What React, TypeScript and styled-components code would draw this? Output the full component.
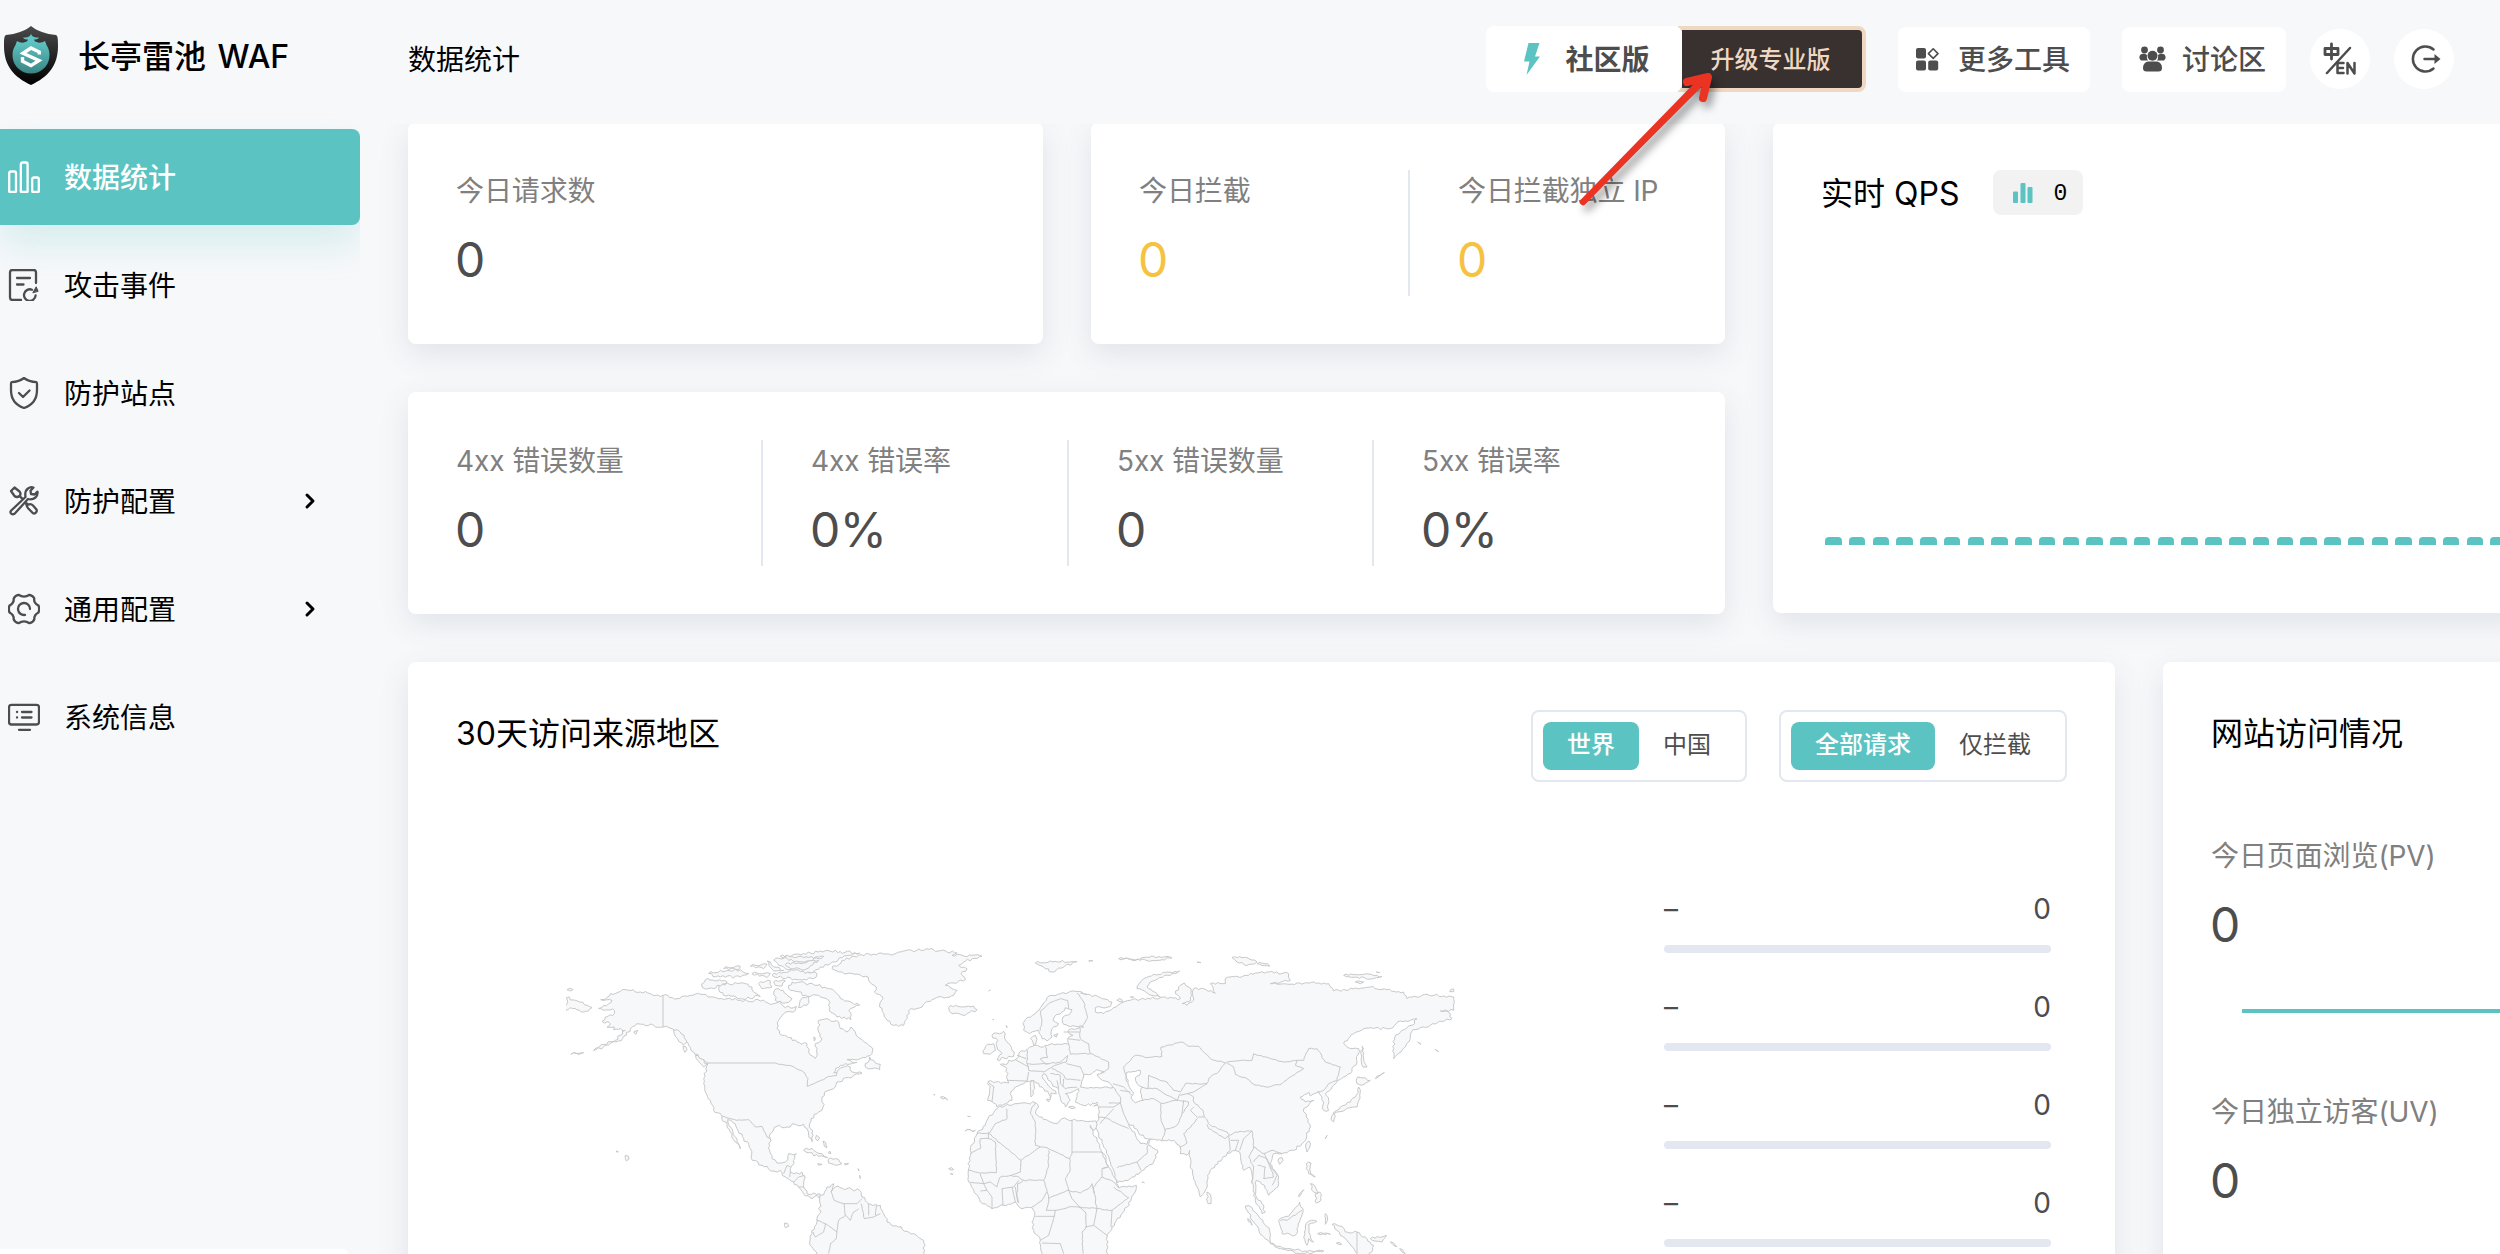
import React from "react";
import styled, { createGlobalStyle, css } from "styled-components";

const TEAL = "#5bc4c2";
const LINE = "#e3e7ef";
const INK = "#4d4d4d";

const GlobalStyle = createGlobalStyle`
  * { box-sizing: border-box; }
  body {
    margin: 0;
    background: #f7f8fa;
    color: #000;
    font-family: Inter, "Noto Sans CJK SC", sans-serif;
    font-size: 28px;
    overflow: hidden;
  }
  svg { display: block; flex: none; }
`;

const Page = styled.div`
  display: flex;
  width: 2500px;
  height: 1254px;
  overflow: hidden;
  position: relative;
`;

const Sidebar = styled.aside`
  width: 360px;
  height: 100%;
  flex: none;
  display: flex;
  flex-direction: column;
  overflow: hidden;
`;

const Brand = styled.div`
  display: flex;
  align-items: center;
  height: 129px;
  padding: 0 0 18px 4px;
  gap: 20px;
  flex: none;
  font-size: 32px;
  font-weight: 500;
  white-space: nowrap;
`;

const BrandName = styled.span`
  padding-bottom: 3px;
  word-spacing: 3px;
`;

const Menu = styled.nav`
  display: flex;
  flex-direction: column;
  gap: 12px;
`;

const MenuItem = styled.div<{ $active?: boolean }>`
  display: flex;
  align-items: center;
  gap: 24px;
  height: 96px;
  padding: 0 43px 0 8px;
  color: #000;
  ${(p) =>
    p.$active &&
    css`
      background: ${TEAL};
      color: #fff;
      font-weight: 500;
      border-radius: 0 8px 8px 0;
      box-shadow: 0 20px 36px rgba(91, 196, 194, 0.2);
    `}
`;

const MenuIcon = styled.svg<{ $active?: boolean }>`
  width: 32px;
  height: 32px;
  fill: none;
  stroke: ${(p) => (p.$active ? "#fff" : INK)};
  stroke-width: 2.3;
  stroke-linecap: round;
  stroke-linejoin: round;
`;

const MenuText = styled.span`
  flex: 1;
  padding-bottom: 3px;
`;

const SideFoot = styled.div`
  margin-top: auto;
  width: 348px;
  height: 5px;
  background: #fff;
  border-radius: 0 8px 0 0;
`;

const Content = styled.div`
  flex: 1;
  min-width: 0;
  display: flex;
  flex-direction: column;
`;

const Header = styled.header`
  display: flex;
  align-items: center;
  height: 124px;
  padding: 0 46px 6px 48px;
  flex: none;
`;

const PageTitle = styled.h1`
  margin: 0;
  flex: 1;
  padding-bottom: 2px;
  font-size: 28px;
  font-weight: 400;
`;

const Edition = styled.div`
  display: flex;
  margin-right: 32px;
`;

const EditionTag = styled.div`
  display: flex;
  align-items: center;
  justify-content: center;
  gap: 25px;
  width: 196px;
  height: 66px;
  padding-left: 6px;
  border-radius: 8px;
  background: #fff;
  color: ${INK};
  font-weight: 600;
  z-index: 1;
`;

const UpgradeButton = styled.div`
  width: 188px;
  height: 66px;
  margin-left: -4px;
  padding: 0 3px 3px 0;
  display: flex;
  align-items: center;
  justify-content: center;
  border: 4px solid #f0d7c1;
  border-radius: 0 8px 8px 0;
  background: #38312f;
  color: #f0d7c1;
  font-size: 24px;
  font-weight: 500;
`;

const HeaderButton = styled.div<{ $w: number; $gap: number; $pad: number }>`
  display: flex;
  align-items: center;
  width: ${(p) => p.$w}px;
  height: 65px;
  padding-left: ${(p) => p.$pad}px;
  gap: ${(p) => p.$gap}px;
  margin-right: ${(p) => (p.$w > 180 ? 32 : 24)}px;
  border-radius: 8px;
  background: #fff;
  color: ${INK};
  font-weight: 500;
`;

const HeaderText = styled.span`
  padding-bottom: 2px;
`;

const RoundButton = styled.div`
  display: flex;
  align-items: center;
  justify-content: center;
  width: 60px;
  height: 60px;
  border-radius: 50%;
  background: #fff;
  & + & {
    margin-left: 24px;
    padding-left: 3px;
  }
`;

const Scroll = styled.main`
  flex: 1;
  min-height: 0;
  overflow: hidden;
`;

const Board = styled.div`
  width: 2500px;
  margin-top: -2px;
  padding-left: 48px;
  display: flex;
  flex-direction: column;
  gap: 48px;
`;

const BoardRow = styled.div`
  display: flex;
  gap: 48px;
`;

const LeftStats = styled.div`
  width: 1317px;
  flex: none;
  display: grid;
  grid-template-columns: 635px 634px;
  gap: 48px;
`;

const Card = styled.section<{ $w?: number; $h: number; $wide?: boolean }>`
  ${(p) => p.$w && `width: ${p.$w}px;`}
  ${(p) => p.$wide && "grid-column: 1 / 3;"}
  height: ${(p) => p.$h}px;
  flex: none;
  padding: 48px;
  border-radius: 8px;
  background: #fff;
  box-shadow: 0 10px 30px rgba(60, 80, 110, 0.12);
`;

const StatRow = styled.div<{ $cols: string }>`
  display: grid;
  grid-template-columns: ${(p) => p.$cols};
`;

const Stat = styled.div<{ $divided?: boolean }>`
  height: 126px;
  padding-left: ${(p) => (p.$divided ? 48 : 0)}px;
  border-left: ${(p) => (p.$divided ? `2px solid ${LINE}` : "none")};
`;

const Label = styled.div`
  height: 42px;
  line-height: 42px;
  color: #808080;
  font-size: 28px;
  font-weight: 400;
  letter-spacing: -0.1px;
  white-space: nowrap;
`;

const Value = styled.div<{ $warn?: boolean }>`
  height: 72px;
  margin-top: 12px;
  line-height: 72px;
  font-size: 48px;
  font-weight: 400;
  letter-spacing: -0.5px;
  margin-left: -1px;
  color: ${(p) => (p.$warn ? "#f5c242" : INK)};
`;

const CardHead = styled.div`
  display: flex;
  align-items: center;
  height: 48px;
`;

const CardTitle = styled.h2`
  margin: 0;
  font-size: 32px;
  line-height: 46px;
  padding-bottom: 1px;
  font-weight: 400;
  white-space: nowrap;
`;

const QpsBadge = styled.div`
  display: flex;
  align-items: center;
  gap: 20px;
  width: 90px;
  height: 45px;
  margin: 0 0 3px 34px;
  padding-left: 20px;
  border-radius: 8px;
  background: #f2f2f2;
  font-family: "Liberation Mono", monospace;
  font-size: 23px;
`;

const QpsCount = styled.span`
  padding-top: 2px;
`;

const QpsBars = styled.div`
  display: flex;
  gap: 7.27px;
  margin: 319px 0 0 4px;
`;

const QpsBar = styled.i`
  flex: none;
  width: 16.5px;
  height: 8px;
  border-radius: 4px 4px 0 0;
  background: ${TEAL};
`;

const Toggles = styled.div`
  display: flex;
  gap: 32px;
  margin: 24px 0 0 auto;
`;

const ToggleGroup = styled.div`
  display: flex;
  height: 72px;
  padding: 10px;
  border: 2px solid ${LINE};
  border-radius: 8px;
`;

const Toggle = styled.div<{ $on?: boolean }>`
  height: 48px;
  line-height: 46px;
  padding: 0 24px;
  border-radius: 8px;
  font-size: 24px;
  font-weight: ${(p) => (p.$on ? 500 : 400)};
  background: ${(p) => (p.$on ? TEAL : "transparent")};
  color: ${(p) => (p.$on ? "#fff" : INK)};
`;

const MapBody = styled.div`
  display: flex;
  justify-content: space-between;
  padding: 131px 16px 0 110px;
`;

const MapSlot = styled.div`
  margin-top: 58px;
  height: 330px;
`;

const RegionList = styled.div`
  width: 387px;
  display: flex;
  flex-direction: column;
`;

const Region = styled.div`
  height: 98px;
`;

const RegionText = styled.div`
  display: flex;
  justify-content: space-between;
  height: 56px;
  line-height: 40px;
  color: ${INK};
  font-weight: 400;
`;

const RegionBar = styled.div`
  height: 8px;
  border-radius: 4px;
  background: ${LINE};
`;

const VisitBlock = styled.div`
  height: 256px;
  margin-top: 77px;
  & + & {
    margin-top: 0;
  }
`;

const VisitLine = styled.div`
  height: 4px;
  margin: 48px 0 0 31px;
  background: ${TEAL};
`;

const Pointer = styled.svg`
  position: absolute;
  left: 1560px;
  top: 59px;
  z-index: 5;
  filter: drop-shadow(4px 6px 4px rgba(0, 0, 0, 0.4));
`;

/* ---------- world map ---------- */

// Adds small deterministic teeth to a traced coast so it reads as a shoreline.
function coast(points: string, amp = 3.2, closed = true): string {
  const n = points.trim().split(/[\s,]+/).map(Number);
  const pts: number[][] = [];
  for (let i = 0; i + 1 < n.length; i += 2) pts.push([n[i], n[i + 1]]);
  const out: string[] = [];
  let seed = 7 + pts.length;
  const rnd = () => {
    seed = (seed * 16807) % 2147483647;
    return seed / 2147483647 - 0.5;
  };
  const count = closed ? pts.length : pts.length - 1;
  for (let i = 0; i < count; i++) {
    const a = pts[i];
    const b = pts[(i + 1) % pts.length];
    out.push(a.join(","));
    const d = Math.hypot(b[0] - a[0], b[1] - a[1]);
    const k = Math.floor(d / 7);
    for (let j = 1; j < k; j++) {
      const t = j / k;
      const o = rnd() * amp * 2;
      out.push(
        `${(a[0] + (b[0] - a[0]) * t - ((b[1] - a[1]) / d) * o).toFixed(1)},${(a[1] + (b[1] - a[1]) * t + ((b[0] - a[0]) / d) * o).toFixed(1)}`
      );
    }
  }
  if (!closed) out.push(pts[pts.length - 1].join(","));
  return "M" + out.join("L") + (closed ? "Z" : "");
}

const WEST_LAND = [
  "368,225 330,220 300,215 255,208 210,220 195,236 181,238 215,240 205,250 175,264 190,270 217,266 222,280 195,290 185,303 210,310 200,320 222,320 220,328 255,330 240,345 225,360 190,372 160,391 205,374 235,362 258,345 270,325 290,310 310,312 340,315 368,320 395,325 410,340 430,360 445,375 460,395 480,415 504,428 497,445 490,490 495,515 510,540 520,570 545,588 560,615 575,640 585,665 600,685 590,655 575,625 562,598 572,600 590,625 610,655 630,685 632,712 665,735 700,752 720,750 735,770 760,785 775,800 790,820 815,835 830,825 838,835 838,820 820,818 800,820 790,800 795,770 785,755 760,760 750,755 755,735 768,700 745,700 735,725 710,728 695,715 688,690 690,655 690,640 710,618 740,620 765,612 790,612 800,625 805,645 815,664 818,645 808,610 812,595 835,575 848,560 845,530 860,512 885,500 890,485 925,472 940,465 965,458 935,455 930,440 910,440 880,458 900,435 915,430 950,426 920,418 960,415 995,400 998,386 985,375 960,355 945,335 932,320 920,335 900,325 895,305 860,295 835,300 835,335 845,355 825,370 830,405 825,414 805,395 800,370 770,365 745,352 725,345 710,325 715,300 730,280 765,270 768,258 735,262 720,240 700,250 660,242 600,240 560,235 520,230 480,222 450,225 410,235",
  "875,145 905,120 985,100 1060,102 1090,92 1165,87 1250,97 1235,105 1325,108 1275,122 1255,135 1280,145 1262,160 1275,178 1240,188 1215,195 1250,210 1240,225 1175,238 1145,260 1112,265 1090,315 1060,315 1040,300 1018,260 1028,235 1002,215 1008,200 975,168 920,160",
  "700,120 760,102 870,93 958,98 905,112 870,130 840,140 820,155 770,160 730,140",
  "695,165 760,150 830,160 820,175 735,175",
  "720,108 790,112 850,108 800,122 745,120",
  "735,132 790,128 835,120 800,145 760,145",
  "535,208 545,190 600,188 635,200 640,215 660,228 600,235 550,225",
  "485,200 495,178 545,182 560,185 520,205",
  "745,205 755,185 780,185 830,195 870,205 900,235 958,255 925,270 932,298 890,290 870,275 865,240 835,225 795,225",
  "655,190 690,182 695,200 665,205", "700,215 715,205 755,235 735,248 705,240", "780,240 805,228 800,255 775,262", "700,185 735,182 725,197 705,195",
  "505,160 540,150 600,148 625,160 600,170 540,170", "550,145 600,138 595,148", "630,138 680,132 670,145", "635,160 690,160 680,172", "680,122 700,140 730,150 700,152",
  "975,440 988,410 1000,420 1020,432 1018,448 995,445",
  "1225,262 1245,255 1300,257 1310,268 1275,285 1235,280", "790,690 815,684 845,700 862,712 835,708 800,697",
  "863,718 885,715 905,730 885,735 865,728", "832,730 845,732 835,735", "912,730 925,730 915,734", "80,208 98,208 90,212", "78,232 105,240 140,255 155,262 130,275 90,262 78,270",
  "828,645 838,652 832,662", "848,662 860,682 852,678", "868,692 872,700 864,698", "92,402 110,400 130,397 108,399", "228,692 234,694 230,696", "255,705 266,716 258,722", "733,908 745,918 735,922",
  "838,835 860,800 880,790 872,815 885,800 920,805 958,810 965,830 985,850 1020,855 1030,880 1040,905 1075,920 1120,940 1150,960 1153,990 1140,1030 870,1030 830,1002 808,965 815,940 830,905 838,880",
  "1330,400 1335,378 1360,370 1365,390 1350,402", "1355,345 1390,333 1392,350 1410,375 1422,395 1420,408 1370,418 1385,400 1370,380 1372,360",
  "400,330 420,335 440,365 430,375 412,355", "428,378 440,388 434,396", "465,405 500,430 490,440 468,415", "820,350 826,354 822,362",
  "280,335 292,330 286,342", "953,745 956,752", "958,765 960,775", "1180,522 1184,524", "1200,530 1222,539", "1282,588 1290,589", "1275,632 1305,630", "1225,745 1240,748", "1230,760 1238,762", "1345,212 1350,209", "1357,298 1361,297", "1398,315 1400,322",
];

const EAST_LAND = [
  "128,310 130,330 148,340 165,332 175,330 185,355 200,362 215,350 215,325 235,310 218,300 222,290 245,275 255,262 275,268 270,280 248,290 250,312 285,318 310,320 275,325 262,335 278,345 262,355 265,372 245,372 195,375 180,380 160,375 150,355 165,345 170,357 165,372 148,380 140,388 118,395 115,410 105,418 85,420 82,430 60,432 80,445 80,475 85,488 25,482 22,490 30,500 22,540 40,548 50,560 75,550 95,540 90,520 105,500 130,490 155,480 185,500 205,520 210,537 212,518 228,520 200,490 185,468 190,460 215,490 235,510 240,535 255,560 270,540 255,520 285,510 295,505 290,520 285,545 310,555 345,550 350,545 355,560 355,590 345,620 352,632 370,680 390,725 400,750 410,787 450,775 480,755 520,725 532,690 505,675 510,655 500,672 480,670 465,645 445,612 460,615 475,640 500,655 515,657 545,662 580,660 600,680 600,700 620,705 628,690 630,735 645,790 660,830 678,805 682,765 690,750 740,700 765,690 778,695 790,750 808,740 818,790 825,840 845,880 855,875 845,850 828,830 828,780 840,785 860,810 865,825 885,805 895,790 895,770 870,730 880,700 905,700 940,690 970,665 990,620 978,590 970,565 1000,540 975,545 960,530 985,515 990,527 1015,515 1025,530 1030,570 1045,570 1045,540 1035,520 1060,495 1090,470 1110,460 1130,425 1135,385 1115,385 1090,370 1120,340 1150,325 1230,325 1260,302 1290,300 1310,295 1295,315 1265,330 1243,350 1240,385 1240,415 1285,365 1298,328 1350,315 1415,295 1405,275 1380,272 1420,270 1420,230 1340,222 1280,235 1270,215 1170,200 1060,212 1045,190 1030,188 870,190 930,180 925,160 860,155 735,175 735,190 690,190 705,218 670,205 640,205 640,240 620,255 605,250 632,240 632,205 612,188 600,195 585,220 600,235 540,232 450,240 420,250 400,262 370,280 345,275 345,262 390,258 395,245 360,232 320,222 280,212 240,220 200,232 185,255 165,280 135,298",
  "50,565 75,555 110,550 165,547 175,560 165,580 205,602 230,610 245,595 275,600 330,603 347,602 350,612 342,630 330,615 350,660 370,700 385,740 405,775 415,803 440,800 468,795 465,815 440,860 395,920 380,950 383,1040 185,1040 180,960 160,930 155,905 163,885 155,862 125,865 105,845 70,855 35,865 0,845 -20,810 -35,785 -35,745 -30,690 -10,640 15,615 20,600",
  "165,128 210,122 290,124 250,140 215,155 190,140", "415,115 470,118 520,108 575,113 500,121", "325,122 338,121", "650,125 662,127",
  "470,205 490,175 520,162 598,152 575,160 510,185 500,200 540,230 500,218", "755,112 800,112 830,125 800,135 770,125", "830,130 862,130 868,138", "1090,165 1150,162 1205,168 1180,175 1130,170", "1125,185 1150,185 1140,190", "1188,155 1198,157", "410,240 415,235 428,245", "450,230 460,230",
  "1408,214 1420,206 1420,214", "1145,378 1150,420 1160,440 1148,440 1142,400", "1130,490 1132,470 1170,480 1145,495", "1135,500 1138,525 1130,560 1095,568 1070,575 1058,580 1080,560 1110,545 1125,530", "1055,585 1062,580 1060,605 1052,598", "1185,475 1200,465 1212,457",
  "978,668 986,662 988,680 980,695", "893,720 905,712 908,720 898,732", "680,815 692,830 692,850 683,850", "978,730 992,728 990,755 1005,770 985,760 978,745", "1005,820 1018,815 1022,840 1008,848", "990,790 1005,800 1012,820 1000,815", "955,830 970,808 960,825",
  "795,857 815,862 840,895 868,930 870,968 845,945 820,905", "895,900 925,888 945,862 958,845 968,865 958,905 945,945 905,940 900,918", "870,970 900,978 960,990 1030,992 960,1000 900,985",
  "975,920 985,903 1010,903 985,912 990,945 1000,965 985,955 980,975 970,950", "1035,880 1042,900 1035,912", "1055,912 1085,918 1095,935 1130,935 1160,955 1180,975 1160,1020 1130,1000 1100,960 1080,945 1070,930", "1170,955 1205,950 1218,945 1205,965 1185,962", "1230,965 1250,980 1240,975", "1258,985 1275,1000 1265,995", "150,490 160,480 160,520 152,530", "198,537 208,537 205,545", "265,560 285,562 275,565", "340,557 352,553", "220,345 232,340 228,350",
  "1312,365 1322,372", "1365,388 1375,394", "485,785 492,787", "1035,655 1040,645", "1012,940 1050,942", "802,895 815,915", "1068,968 1084,972",
];

const SEAS = [
  "310,462 300,500 340,503 372,500 398,502 390,490 360,475 350,462 372,455 350,448 332,462",
  "437,458 480,450 478,465 465,472 470,490 485,500 480,515 488,540 465,547 452,530 460,520 445,495",
];

const WEST_BORDERS = [
  "504,428 706,428", "706,428 715,432 755,437 790,455 803,475 800,498 830,485 850,478 865,468 888,466 890,455",
  "545,588 590,600 625,598 645,620 665,618 680,650 690,655", "730,760 740,735 750,740", "750,755 748,770", "760,785 775,770 793,765", "775,800 790,800",
  "872,815 882,840 912,850 915,885 895,900 890,935", "912,850 950,850 965,835", "915,885 930,900 940,875 955,865", "962,850 972,895 1000,890 1020,880", "985,850 985,885", "1008,855 1005,885",
  "830,900 855,910 850,935 825,950 818,935", "855,910 890,935 888,955 870,970 865,1000",
];

const EAST_BORDERS = [
  "180,330 185,300 180,275 205,250 240,235 262,240 265,265", "290,218 310,245 322,292 305,318", "320,222 300,218",
  "298,322 300,355 325,370 330,400 270,402 265,372", "262,355 300,360", "250,335 298,335", "330,400 385,425 385,445 360,460",
  "195,378 202,412 180,415 195,430 240,425 262,405", "140,388 140,430 155,432 205,430", "140,430 145,450 190,455 215,440 240,430 258,425 262,405",
  "258,430 300,440 310,462", "215,445 245,460 255,475 300,480", "210,460 240,465 240,490 255,505 290,500", "110,405 138,415", "105,418 145,440", "80,480 140,482 145,455",
  "40,500 35,545", "250,475 248,500", "230,480 235,505",
  "398,500 412,520 420,530 420,548 385,548", "398,490 430,500 455,525", "420,510 450,515", "420,548 430,580 445,612", "355,560 400,560 420,548", "355,590 375,592 400,565", "360,610 375,592 410,610 445,625",
  "410,742 470,725 500,700 502,675", "470,725 482,750", "440,485 430,440 465,405 500,412 545,408 542,380 605,365 625,378 655,378 690,415 735,428 715,455 690,470 680,490 615,490 600,515 580,510 560,485 530,475 505,465 502,505 485,500",
  "502,505 530,505 560,525 590,540 600,520", "488,540 520,535 545,550 565,545 590,540", "540,550 542,600 555,630 545,660", "552,630 590,615 605,580 620,560 625,545 590,540", "605,580 610,540",
  "620,520 640,530 640,545 668,570 672,590 655,590 640,610 610,640 620,668 598,680", "600,525 640,515 680,490", "640,560 630,570 650,590",
  "735,428 765,422 815,420 820,400 870,415 910,425 950,420 970,420 985,385 1010,385 1035,425 1080,440 1070,480 1045,490 1030,510 1010,515",
  "740,430 760,440 765,462 800,475 820,492 865,500 905,490 930,470 970,445 945,435 950,420",
  "672,590 690,615 740,635 750,645 765,635 815,632 820,680 850,700 880,690 905,700", "680,612 685,625 735,655 745,645", "745,645 750,690 740,698", "750,660 775,660 765,690", "778,690 790,655 815,632", "820,680 805,710 820,740 815,790", "820,725 835,705 860,715 880,770 850,775 855,740 832,735", "850,700 865,730 890,765 875,795",
  "165,547 155,560 150,580 165,605 165,675", "78,565 80,595 45,610 25,640", "25,640 122,720 180,680 165,675", "275,600 275,695 362,695", "275,695 268,715 200,682 180,680", "268,715 268,755 255,775 265,810", "205,690 205,735 190,780 130,780 115,770 92,765 60,770 50,800", "122,720 120,755 92,765", "-10,640 25,637 25,655 0,655 0,685 -30,700", "25,655 45,665 48,757 0,757", "-35,750 0,760 10,790 -30,785", "10,790 20,810 0,812", "50,800 30,785 10,790", "20,810 35,830 35,865", "65,805 68,855", "95,800 105,845", "65,805 100,800 115,780", "105,800 112,845", "130,780 112,790 110,825 115,848", "190,780 200,815 185,840 155,860", "200,815 205,835 260,810 265,810 300,818 330,800 335,790 342,820 350,865", "205,835 198,870 225,870 265,860 295,860 350,865 395,870 445,832 400,800", "165,888 222,888 225,870", "222,888 205,945 180,960", "342,820 340,800 365,770 400,785 412,800", "362,695 385,740 365,745 365,770", "395,870 392,920", "350,865 340,915 380,945", "315,920 340,915", "295,860 315,875 318,920 305,935 308,1000", "265,810 275,835 300,862", "185,968 240,970 250,1000", "365,745 380,740",
  "900,900 920,900 950,880 965,870", "1130,935 1130,1000",
  "25,488 42,500",
];

const isStraight = (d: string) => d.split(" ").length <= 3;

const WorldMap = () => (
  <svg width="890" height="330" viewBox="77 80 2670 990" style={{ overflow: "hidden" }}>
    <g fill="#f7f8fa" stroke="#c8c8c8" strokeWidth="3" strokeLinejoin="round">
      {WEST_LAND.map((d) => (
        <path key={d} d={coast(d, 4.5)} />
      ))}
      {WEST_BORDERS.map((d) => (
        <path key={d} d={coast(d, isStraight(d) ? 0 : 1.2, false)} fill="none" />
      ))}
      <path d="M368,225V320" />
      <g transform="translate(1320 0)">
        {EAST_LAND.map((d) => (
          <path key={d} d={coast(d, 3.6)} />
        ))}
        {SEAS.map((d) => (
          <path key={d} d={coast(d, 2)} fill="#fff" />
        ))}
        {EAST_BORDERS.map((d) => (
          <path key={d} d={coast(d, isStraight(d) ? 0 : 1.8, false)} fill="none" />
        ))}
      </g>
    </g>
  </svg>
);

/* ---------- icons ---------- */

const Logo = () => (
  <svg width="54" height="60" viewBox="0 0 54 60">
    <defs>
      <linearGradient id="shield" x1="0" y1="0" x2="0" y2="1">
        <stop offset="0" stopColor="#4a4a4a" />
        <stop offset="1" stopColor="#000" />
      </linearGradient>
      <linearGradient id="disc" x1="0" y1="0" x2="0" y2="1">
        <stop offset="0" stopColor="#5fc6c5" />
        <stop offset="1" stopColor="#3b8583" />
      </linearGradient>
    </defs>
    <path fill="url(#shield)" d="M27 0C21 5 12 8 2 9C0 10 0 14 0 20C0 40 10 51 27 59C44 51 54 40 54 20C54 14 54 10 52 9C42 8 33 5 27 0Z" />
    <path fill="url(#disc)" d="M13 15C17 17.500 21 17 24 14.500H30C33 17 37 17.500 41 15L42.500 19A18.500 18.500 0 1 1 11.500 19Z" />
    <path fill="#5fc6c5" d="M27 7.500C27.500 10.500 31 12 35 11.500C34 13.500 31.500 13.500 30 13.500L30.500 15H23.500L24 13.500C22.500 13.500 20 13.500 19 11.500C23 12 26.500 10.500 27 7.500Z" />
    <path fill="none" stroke="#fff" strokeWidth="3.400" strokeLinejoin="miter" d="M35.300 28.500V26L27 22L19 27.200L35 34.500L27 39.600L18.500 35.200V31" />
  </svg>
);

const BarsIcon = () => (
  <MenuIcon $active viewBox="0 0 32 32">
    <path d="M1.200 30.800V12.500Q1.200 10.500 3.200 10.500H6.500Q8 10.500 8 12.500V30.800ZM12.800 30.800V3.500Q12.800 1.500 14.800 1.500H18Q19.600 1.500 19.600 3.500V30.800ZM24.200 30.800V18.500Q24.200 16.500 26.200 16.500H29Q30.800 16.500 30.800 18.500V30.800Z" />
  </MenuIcon>
);

const EventIcon = () => (
  <MenuIcon viewBox="0 0 32 32">
    <path d="M28 14V3.500Q28 1 25.500 1H4.500Q2 1 2 3.500V28.500Q2 31 4.500 31H13M9 9H22M9 15.500H15.500M27.600 26.500A5.800 5.800 0 1 1 24 20.700" />
    <path d="M25 23.500L28.200 17.800L30 22Z" fill={INK} strokeWidth="1" />
  </MenuIcon>
);

const ShieldIcon = () => (
  <MenuIcon viewBox="0 0 32 32">
    <path d="M16 1C12 4 8 4.800 3.500 5.200Q3 5.500 3 7V13C3 22 7 28 16 31C25 28 29 22 29 13V7Q29 5.500 28.500 5.200C24 4.800 20 4 16 1ZM11 16L15 20L21.500 13.500" />
  </MenuIcon>
);

const ToolsIcon = () => (
  <MenuIcon viewBox="0 0 32 32">
    <path d="M3 6L6.500 2.500L11.500 6.500Q13.500 9 11.500 11Q9 13 6.500 11ZM11.800 11.200L14 13.400M17.800 17.800L20.300 19.600Q23 18.500 25 20.500L28.500 24.500Q29.200 26 28 27.500Q26.800 29 25 28.200L20.300 23.500Q18.800 22 17.800 17.800M3.200 25.500L17.500 12Q16.500 6 20 3.500Q22.500 1.500 25.500 2.500L22.500 5.800L23 9L26.500 9.500L29.500 6.700Q30 10 27.500 12.500Q24.500 15 20 14L6.800 28.500Q4.500 30 3 28.500Q1.800 27 3.200 25.500Z" />
  </MenuIcon>
);

const GearIcon = () => (
  <MenuIcon viewBox="0 0 32 32">
    <path d="M10.500 1.800Q16 5.500 21.500 1.800Q25.500 3 26.300 5.500Q25.500 10 30.500 12.500Q31.800 16 30.500 19.500Q25.800 22 26.300 26.500Q25 29.500 21.500 30.200Q16 26.500 10.500 30.200Q7 29.500 5.700 26.500Q6.200 22 1.500 19.500Q.2 16 1.500 12.500Q6.200 10 5.700 5.500Q7 2.500 10.500 1.800ZM22 16A6 6 0 1 0 17 21.900" />
  </MenuIcon>
);

const SystemIcon = () => (
  <MenuIcon viewBox="0 0 32 32">
    <path d="M3.500 3.800H28.500Q31 3.800 31 6.300V21Q31 23.500 28.500 23.500H3.500Q1 23.500 1 21V6.300Q1 3.800 3.500 3.800ZM14 11H23.500M14 16.500H23.500M9 11H9.100M9 16.500H9.100M11 28.800H22" />
  </MenuIcon>
);

const Chevron = () => (
  <svg width="14" height="18" viewBox="0 0 14 18" fill="none" stroke="#000" strokeWidth="3" strokeLinecap="round" strokeLinejoin="round">
    <path d="M4 3L10 9L4 15" />
  </svg>
);

const BoltIcon = () => (
  <svg width="16" height="32" viewBox="0 0 16 32" fill={TEAL}>
    <path d="M4.500 0H15.500L11 13.500H16L2.500 32L5.500 18.500H0Z" />
  </svg>
);

const AppsIcon = () => (
  <svg width="23" height="23" viewBox="0 0 23 23" fill={INK}>
    <rect width="10" height="10.500" rx="2" />
    <rect y="12.500" width="10" height="10" rx="2" />
    <rect x="12.200" y="12.500" width="10" height="10" rx="2" />
    <path d="M17.200 .8L22 5.600L17.200 10.400L12.400 5.600Z" fill="none" stroke={INK} strokeWidth="1.600" strokeLinejoin="round" />
  </svg>
);

const PeopleIcon = () => (
  <svg width="27" height="26" viewBox="0 0 27 26" fill={INK}>
    <circle cx="5.500" cy="4" r="3.400" />
    <circle cx="21.500" cy="4" r="3.400" />
    <path d="M1.500 8.500Q5 7 8 9Q7.500 13 9 14.500H2Q-1 12 1.500 8.500ZM25.500 8.500Q22 7 19 9Q19.500 13 18 14.500H25Q28 12 25.500 8.500Z" />
    <circle cx="13.500" cy="9.800" r="5" />
    <path d="M9 15.500H18Q23 16.500 23 22Q23 25.500 19.500 25.500H7.500Q4 25.500 4 22Q4 16.500 9 15.500Z" />
  </svg>
);

const LangIcon = () => (
  <svg width="34" height="34" viewBox="0 0 34 34" fill="none" stroke={INK} strokeWidth="2.800" strokeLinecap="round" strokeLinejoin="round">
    <path d="M2 6.500H15V12.500H2ZM8.500 2V17" />
    <path d="M27 6L4 31" strokeWidth="2.500" />
    <path d="M20.500 21H14.500V31H20.500M14.500 26H20M24.500 31.500V21L31.500 31.500V21" strokeWidth="2.500" />
  </svg>
);

const LogoutIcon = () => (
  <svg width="30" height="30" viewBox="0 0 30 30" fill="none" stroke={INK} strokeWidth="2.500" strokeLinecap="round">
    <path d="M22.500 5.500A12.500 12.500 0 1 0 22.500 24.500M13.500 15H25" />
    <path d="M23.500 10L29.500 15L23.500 20Z" fill={INK} stroke="none" />
  </svg>
);

const MiniBars = () => (
  <svg width="20" height="20" viewBox="0 0 20 20" fill={TEAL}>
    <rect y="8.500" width="5" height="11.500" rx="1" />
    <rect x="7.500" width="5" height="20" rx="1" />
    <rect x="14.500" y="4" width="5" height="16" rx="1" />
  </svg>
);

const menu = [
  { text: "攻击事件", icon: <EventIcon /> },
  { text: "防护站点", icon: <ShieldIcon /> },
  { text: "防护配置", icon: <ToolsIcon />, more: true },
  { text: "通用配置", icon: <GearIcon />, more: true },
  { text: "系统信息", icon: <SystemIcon /> },
];

export default function App() {
  return (
    <>
      <GlobalStyle />
      <Page>
        <Sidebar>
          <Brand>
            <Logo />
            <BrandName>长亭雷池 WAF</BrandName>
          </Brand>
          <Menu>
            <MenuItem $active>
              <BarsIcon />
              <MenuText>数据统计</MenuText>
            </MenuItem>
            {menu.map((m) => (
              <MenuItem key={m.text}>
                {m.icon}
                <MenuText>{m.text}</MenuText>
                {m.more && <Chevron />}
              </MenuItem>
            ))}
          </Menu>
          <SideFoot />
        </Sidebar>
        <Content>
          <Header>
            <PageTitle>数据统计</PageTitle>
            <Edition>
              <EditionTag>
                <BoltIcon />
                <HeaderText>社区版</HeaderText>
              </EditionTag>
              <UpgradeButton>升级专业版</UpgradeButton>
            </Edition>
            <HeaderButton $w={192} $gap={19} $pad={18}>
              <AppsIcon />
              <HeaderText>更多工具</HeaderText>
            </HeaderButton>
            <HeaderButton $w={164} $gap={16} $pad={17}>
              <PeopleIcon />
              <HeaderText>讨论区</HeaderText>
            </HeaderButton>
            <RoundButton>
              <LangIcon />
            </RoundButton>
            <RoundButton>
              <LogoutIcon />
            </RoundButton>
          </Header>
          <Scroll>
            <Board>
              <BoardRow>
                <LeftStats>
                  <Card $h={222}>
                    <Stat>
                      <Label>今日请求数</Label>
                      <Value>0</Value>
                    </Stat>
                  </Card>
                  <Card $h={222}>
                    <StatRow $cols="269px 269px">
                      <Stat>
                        <Label>今日拦截</Label>
                        <Value $warn>0</Value>
                      </Stat>
                      <Stat $divided>
                        <Label>今日拦截独立 IP</Label>
                        <Value $warn>0</Value>
                      </Stat>
                    </StatRow>
                  </Card>
                  <Card $h={222} $wide>
                    <StatRow $cols="305px 306px 305px 305px">
                      <Stat>
                        <Label>4xx 错误数量</Label>
                        <Value>0</Value>
                      </Stat>
                      <Stat $divided>
                        <Label>4xx 错误率</Label>
                        <Value>0%</Value>
                      </Stat>
                      <Stat $divided>
                        <Label>5xx 错误数量</Label>
                        <Value>0</Value>
                      </Stat>
                      <Stat $divided>
                        <Label>5xx 错误率</Label>
                        <Value>0%</Value>
                      </Stat>
                    </StatRow>
                  </Card>
                </LeftStats>
                <Card $w={1317} $h={491}>
                  <CardHead>
                    <CardTitle>实时 QPS</CardTitle>
                    <QpsBadge>
                      <MiniBars />
                      <QpsCount>0</QpsCount>
                    </QpsBadge>
                  </CardHead>
                  <QpsBars>
                    {Array.from({ length: 50 }, (_, i) => (
                      <QpsBar key={i} />
                    ))}
                  </QpsBars>
                </Card>
              </BoardRow>
              <BoardRow>
                <Card $w={1707} $h={900}>
                  <CardHead>
                    <CardTitle>30天访问来源地区</CardTitle>
                    <Toggles>
                      <ToggleGroup>
                        <Toggle $on>世界</Toggle>
                        <Toggle>中国</Toggle>
                      </ToggleGroup>
                      <ToggleGroup>
                        <Toggle $on>全部请求</Toggle>
                        <Toggle>仅拦截</Toggle>
                      </ToggleGroup>
                    </Toggles>
                  </CardHead>
                  <MapBody>
                    <MapSlot>
                      <WorldMap />
                    </MapSlot>
                    <RegionList>
                      {[0, 1, 2, 3].map((i) => (
                        <Region key={i}>
                          <RegionText>
                            <span>–</span>
                            <span>0</span>
                          </RegionText>
                          <RegionBar />
                        </Region>
                      ))}
                    </RegionList>
                  </MapBody>
                </Card>
                <Card $w={900} $h={900}>
                  <CardHead>
                    <CardTitle>网站访问情况</CardTitle>
                  </CardHead>
                  <VisitBlock>
                    <Label>今日页面浏览(PV)</Label>
                    <Value>0</Value>
                    <VisitLine />
                  </VisitBlock>
                  <VisitBlock>
                    <Label>今日独立访客(UV)</Label>
                    <Value>0</Value>
                    <VisitLine />
                  </VisitBlock>
                </Card>
              </BoardRow>
            </Board>
          </Scroll>
        </Content>
        <Pointer width="170" height="170" viewBox="0 0 170 170" fill="none" stroke="#eb3323" strokeLinecap="round" strokeLinejoin="round">
          <path d="M23 143L140 23" strokeWidth="6.500" />
          <path d="M127 23L148 18L143 39" strokeWidth="8" />
          <path d="M24 142L148 18" strokeWidth="5" />
        </Pointer>
      </Page>
    </>
  );
}
